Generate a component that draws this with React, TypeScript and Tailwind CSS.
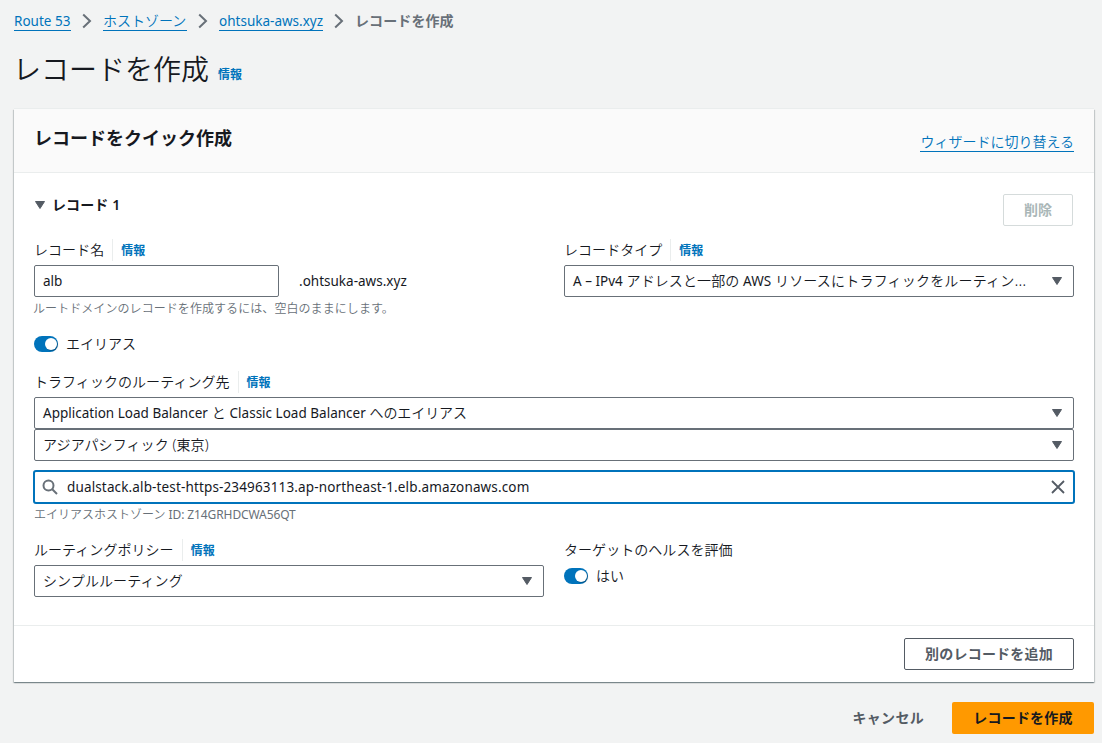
import type { ReactNode } from 'react';

function Chevron() {
  return (
    <svg width="10" height="16" viewBox="0 0 10 16" fill="none" stroke="#687078" strokeWidth="2" className="shrink-0">
      <path d="M1.2 1.5 8 8l-6.8 6.5" />
    </svg>
  );
}

function Caret() {
  return (
    <svg width="12" height="10" viewBox="0 0 12 10" className="shrink-0" fill="#545b64" stroke="#545b64" strokeLinejoin="round">
      <path d="M1.5 1.5h9L6 8.5z" />
    </svg>
  );
}

function Toggle() {
  return (
    <span className="flex h-4 w-6 shrink-0 items-center justify-end rounded-full bg-[#0073bb] p-0.5 pr-[1.5px]">
      <span className="size-3 rounded-full bg-white shadow-[1px_1px_1px_rgba(0,0,0,0.25)]" />
    </span>
  );
}

function Info() {
  return <a className="text-xs leading-[22px] font-bold text-[#0073bb]">情報</a>;
}

function Label({ children, info = true }: { children: ReactNode; info?: boolean }) {
  return (
    <div className="flex h-[22px] items-center leading-[22px]">
      <span className="tracking-[0.05px]">{children}</span>
      {info && (
        <span className="ml-2 flex h-[22px] items-center border-l border-[#eaeded] pt-0.5 pl-2">
          <Info />
        </span>
      )}
    </div>
  );
}

function Select({ children }: { children: ReactNode }) {
  return (
    <div className="flex h-8 items-center justify-between rounded-[2px] border border-[#687078] bg-white pr-2.5 pl-2">
      <span className="tracking-[0.1px] whitespace-nowrap">{children}</span>
      <Caret />
    </div>
  );
}

function Latin({ children }: { children: ReactNode }) {
  return <span className="text-[13.5px] font-normal tracking-[0.01px]">{children}</span>;
}

export default function App() {
  return (
    <div className="h-[743px] w-[1102px] overflow-hidden bg-[#f2f3f3] pt-2.5 pr-2 pl-3.5 font-['Noto_Sans','Noto_Sans_CJK_JP',sans-serif] text-sm leading-[22px] font-[350] text-[#16191f]">
      <nav className="flex h-[22px] items-center text-[#0073bb]">
        <a className="h-[21px] w-[57px] self-start border-b border-[#0073bb] leading-[22px] whitespace-nowrap"><Latin>Route 53</Latin></a>
        <span className="flex w-8 justify-center"><Chevron /></span>
        <a className="h-[21px] w-[84px] self-start border-b border-[#0073bb] leading-[22px] whitespace-nowrap">ホストゾーン</a>
        <span className="flex w-8 justify-center"><Chevron /></span>
        <a className="h-[21px] w-[104px] self-start border-b border-[#0073bb] leading-[22px] whitespace-nowrap"><Latin>ohtsuka-aws.xyz</Latin></a>
        <span className="flex w-8 justify-center"><Chevron /></span>
        <span className="font-bold tracking-[0.1px] text-[#687078]">レコードを作成</span>
      </nav>

      <div className="mt-[18px] flex h-9 items-start">
        <h1 className="-ml-px pt-px text-[28px] leading-9">レコードを作成</h1>
        <span className="ml-[9px] pt-[13px]"><Info /></span>
      </div>

      <section className="mt-[23px] h-[573px] bg-white shadow-[0_1px_1px_0_rgba(0,28,36,0.3),1px_1px_1px_0_rgba(0,28,36,0.15),-1px_1px_1px_0_rgba(0,28,36,0.15),0_-1px_0_0_#eaeded]">
        <header className="flex h-16 justify-between border-b border-[#eaeded] bg-[#fafafa] px-5">
          <h2 className="pt-[18px] text-lg leading-[22px] font-bold">レコードをクイック作成</h2>
          <a className="mt-[21px] h-[22px] border-b border-[#0073bb] leading-6 text-[#0073bb]">ウィザードに切り替える</a>
        </header>

        <div className="px-5">
          <div className="flex h-[66px] justify-between pt-[21px]">
            <div className="flex h-[22px] items-center gap-[6px] font-bold">
              <Caret />
              <span className="tracking-[0.1px]">レコード <span className="font-semibold">1</span></span>
            </div>
            <button className="mr-px h-8 w-[70px] rounded-[2px] border border-[#d5dbdb] font-bold text-[#aab7b8]">削除</button>
          </div>

          <div className="grid grid-cols-2 gap-x-5">
            <div>
              <Label>レコード名</Label>
              <div className="mt-[4px] flex items-center">
                <div className="flex h-8 w-[245px] items-center rounded-[2px] border border-[#687078] px-2"><Latin>alb</Latin></div>
                <span className="ml-5"><Latin>.ohtsuka-aws.xyz</Latin></span>
              </div>
              <p className="-ml-px pt-px text-xs leading-[22px] tracking-[0.07px] text-[#687078]">ルートドメインのレコードを作成するには、空白のままにします。</p>
            </div>
            <div>
              <Label>レコードタイプ</Label>
              <div className="mt-[4px]">
                <Select><Latin>A – IPv4</Latin> アドレスと一部の <Latin>AWS</Latin> <span className="tracking-[0.2px]">リソースにトラフィックをルーティン<span className="text-base leading-none">…</span></span></Select>
              </div>
            </div>
          </div>

          <div className="mt-[13px] flex h-[22px] items-center gap-2"><Toggle />エイリアス</div>

          <div className="mt-4">
            <Label>トラフィックのルーティング先</Label>
            <div className="mt-[4px]">
              <Select><Latin>Application Load Balancer</Latin> と <Latin>Classic Load Balancer</Latin> <span className="tracking-[-0.1px]">へのエイリアス</span></Select>
              <Select>アジアパシフィック (東京)</Select>
            </div>
            <div className="-mx-px mt-[9px] flex h-[34px] items-center rounded-[3px] border-2 border-[#0073bb] pr-2 pl-[7px]">
              <svg width="16" height="16" viewBox="0 0 16 16" fill="none" stroke="#687078" strokeWidth="2">
                <circle cx="6.5" cy="6.5" r="5" />
                <path d="m10 10 5 5" />
              </svg>
              <span className="ml-[9px] flex-1 text-[13.5px] font-normal tracking-[0.14px]">dualstack.alb-test-https-234963113.ap-northeast-1.elb.amazonaws.com</span>
              <svg width="14" height="14" viewBox="0 0 14 14" fill="none" stroke="#545b64" strokeWidth="1.8">
                <path d="m1 1 12 12M13 1 1 13" />
              </svg>
            </div>
            <p className="text-xs leading-[22px] text-[#687078]">エイリアスホストゾーン <span className="font-normal tracking-[-0.1px]">ID: Z14GRHDCWA56QT</span></p>
          </div>

          <div className="mt-[13px] grid grid-cols-2 gap-x-5">
            <div>
              <Label>ルーティングポリシー</Label>
              <div className="mt-[4px]"><Select>シンプルルーティング</Select></div>
            </div>
            <div>
              <Label info={false}>ターゲットのヘルスを評価</Label>
              <div className="mt-1 flex h-[22px] items-center gap-2"><Toggle />はい</div>
            </div>
          </div>
        </div>

        <footer className="mt-7 flex h-[57px] justify-end border-t border-[#eaeded] px-5 pt-3">
          <button className="h-8 w-[170px] rounded-[2px] border border-[#545b64] font-bold tracking-[0.2px] text-[#545b64]">別のレコードを追加</button>
        </footer>
      </section>

      <div className="mt-5 flex items-center justify-end">
        <button className="mr-7 font-bold tracking-[0.3px] text-[#545b64]">キャンセル</button>
        <button className="h-8 w-[142px] rounded-[2px] bg-[#ff9900] font-bold tracking-[0.2px]">レコードを作成</button>
      </div>
    </div>
  );
}
